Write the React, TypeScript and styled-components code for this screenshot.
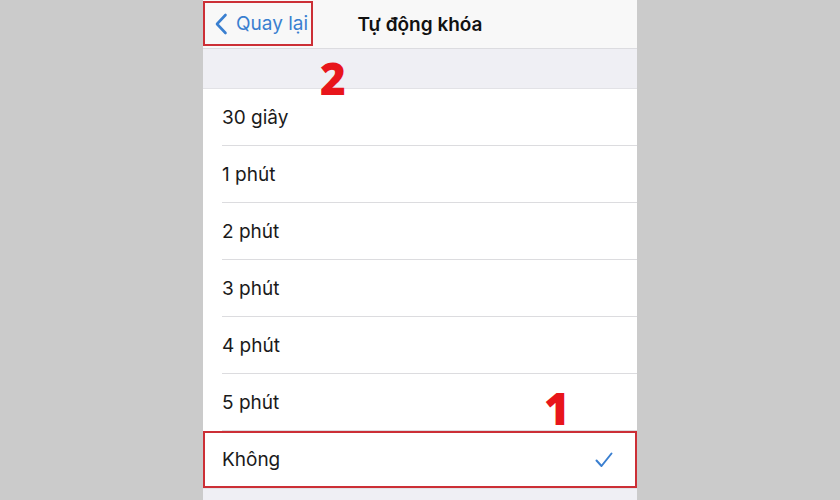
import React from 'react';
import styled, {createGlobalStyle} from "styled-components";

const GlobalStyle = createGlobalStyle`
    html, body {
        margin: 0;
        padding: 0;
        background: #cbcbcb;
        font-family: "Inter", "Liberation Sans", sans-serif;
    }
`

const options = ["30 giây", "1 phút", "2 phút", "3 phút", "4 phút", "5 phút", "Không"];

export default function App() {
    return (
        <>
            <GlobalStyle/>
            <Page>
                <Phone>
                    <NavBar>
                        <BackButton>
                            <svg width="14" height="22" viewBox="0 0 14 22">
                                <path d="M11.5 2 L3 11 L11.5 20" fill="none" stroke="#3a7fd0" strokeWidth="2.6"
                                      strokeLinecap="round" strokeLinejoin="round"/>
                            </svg>
                            <span>Quay lại</span>
                        </BackButton>
                        <Title>Tự động khóa</Title>
                    </NavBar>
                    <SectionGap>
                        <Marker $left={117} $top={7}>2</Marker>
                    </SectionGap>
                    <List>
                        {options.map((o, i) => (
                            <Row key={o} $selected={o === "Không"}>
                                <RowInner $last={i === options.length - 1}>
                                    <Label>{o}</Label>
                                    {o === "Không" && (
                                        <svg width="18" height="16" viewBox="0 0 18 16">
                                            <path d="M1.5 8.5 L6.5 14 L16.5 1.5" fill="none" stroke="#3a7fd0"
                                                  strokeWidth="2" strokeLinecap="round" strokeLinejoin="round"/>
                                        </svg>
                                    )}
                                </RowInner>
                                {i === options.length - 2 && <Marker $left={341} $top={12}>1</Marker>}
                            </Row>
                        ))}
                    </List>
                    <Footer/>
                </Phone>
            </Page>
        </>
    );
}

const Page = styled.div`
    width: 840px;
    height: 500px;
    display: flex;
    justify-content: center;
    overflow: hidden;
`

const Phone = styled.div`
    width: 434px;
    display: flex;
    flex-direction: column;
    background: #efeff4;
    position: relative;
`

const NavBar = styled.div`
    height: 48px;
    background: #f8f8f8;
    border-bottom: 1px solid #dcdce0;
    position: relative;
    display: flex;
    align-items: center;
    justify-content: center;
`

const BackButton = styled.div`
    position: absolute;
    left: 0;
    top: 1px;
    width: 110px;
    height: 45px;
    box-sizing: border-box;
    border: 2px solid #cc2f36;
    display: flex;
    align-items: center;
    gap: 8px;
    padding-left: 9px;
    color: #3a7fd0;
    font-size: 19px;
`

const Title = styled.div`
    font-size: 19px;
    font-weight: 600;
    color: #111;
`

const SectionGap = styled.div`
    height: 39px;
    position: relative;
    border-bottom: 1px solid #e2e2e6;
`

const Marker = styled.div<{ $left: number; $top: number }>`
    position: absolute;
    left: ${p => p.$left}px;
    top: ${p => p.$top}px;
    font-family: "Open Sans", "Liberation Sans", sans-serif;
    font-weight: 800;
    font-size: 44px;
    line-height: 44px;
    color: #e8151b;
    z-index: 2;
`

const List = styled.div`
    background: #fff;
    display: flex;
    flex-direction: column;
`

const Row = styled.div<{ $selected: boolean }>`
    height: 57px;
    padding-left: 19px;
    position: relative;
    outline: ${p => p.$selected ? "2px solid #cc2f36" : "none"};
    outline-offset: -2px;
`

const RowInner = styled.div<{ $last: boolean }>`
    height: 100%;
    box-sizing: border-box;
    display: flex;
    align-items: center;
    justify-content: space-between;
    padding-right: 24px;
    border-bottom: ${p => p.$last ? "none" : "1px solid #dcdcdf"};
`

const Label = styled.span`
    font-size: 19px;
    color: #1a1a1a;
`

const Footer = styled.div`
    flex: 1;
    border-top: 1px solid #e2e2e6;
`
